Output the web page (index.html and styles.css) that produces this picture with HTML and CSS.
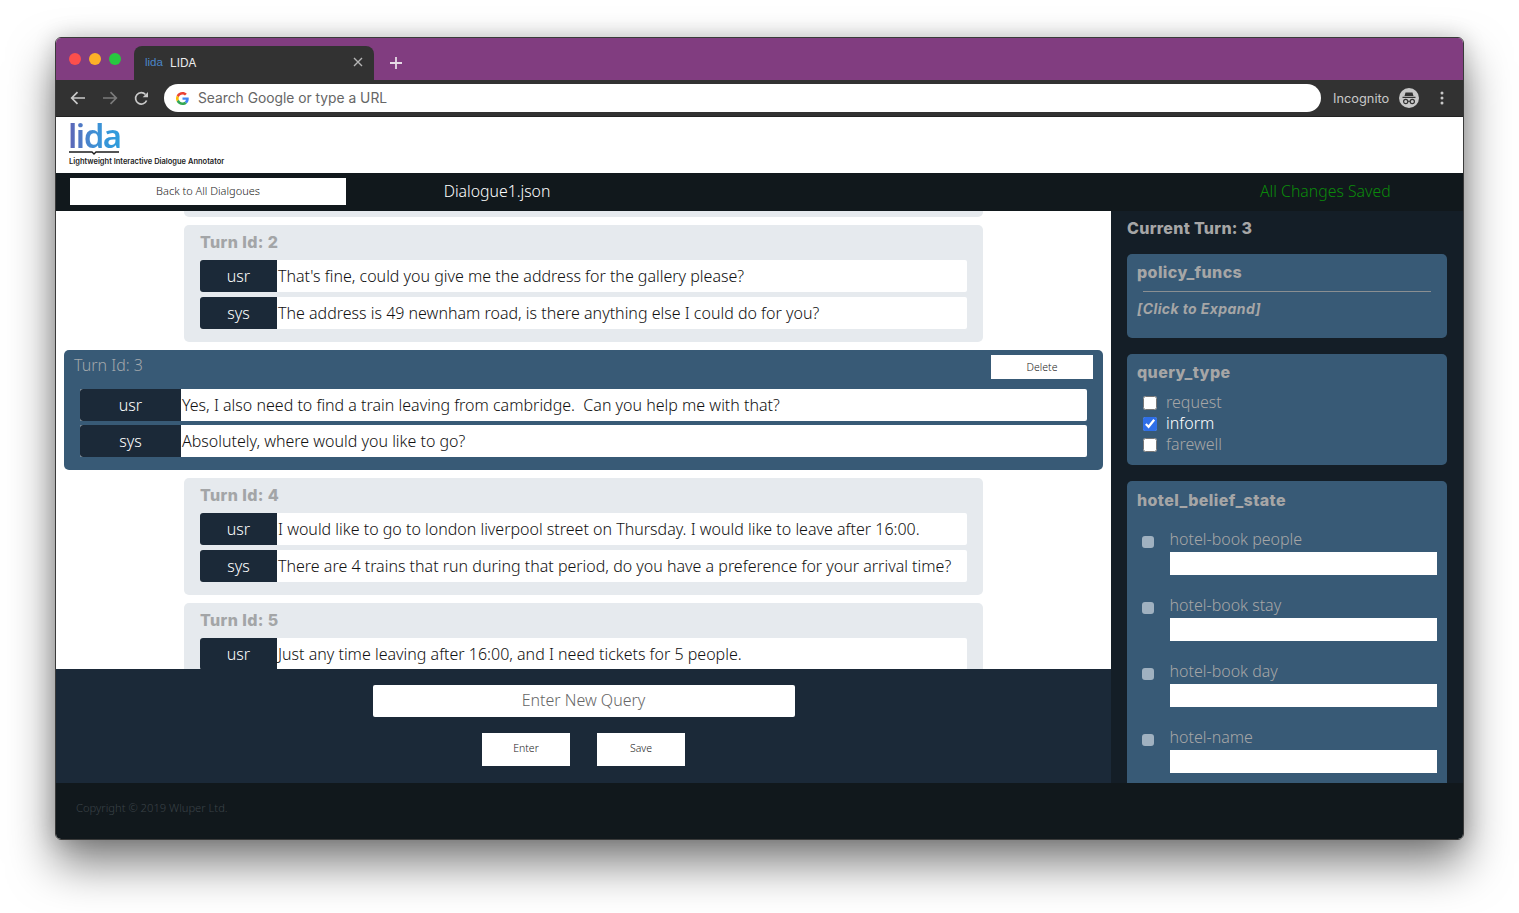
FILE: index.html
```html
<!DOCTYPE html>
<html lang="en">
<head>
    <meta charset="UTF-8">
    <title>LIDA</title>
    <link rel="stylesheet" href="styles.css">
</head>
<body>
    <div class="window">
        <!-- Browser chrome -->
        <div class="tabbar">
            <div class="lights">
                <span class="light red"></span>
                <span class="light yellow"></span>
                <span class="light green"></span>
            </div>
            <div class="tab">
                <span class="tab-logo">lida</span>
                <span class="tab-title">LIDA</span>
                <svg class="tab-close" width="10" height="10" viewBox="0 0 10 10"><path d="M1 1l8 8M9 1l-8 8" stroke="#b5b5b5" stroke-width="1.4"/></svg>
            </div>
            <svg class="new-tab" width="12" height="12" viewBox="0 0 12 12"><path d="M6 0v12M0 6h12" stroke="#e6dbe6" stroke-width="1.8"/></svg>
        </div>
        <div class="toolbar">
            <svg class="nav-icon" width="16" height="14" viewBox="0 0 16 14"><path d="M15 7H2M7.500 1.200L1.700 7l5.800 5.800" fill="none" stroke="#c9c9c9" stroke-width="1.700"/></svg>
            <svg class="nav-icon" width="16" height="14" viewBox="0 0 16 14"><path d="M1 7h13M8.500 1.200L14.300 7l-5.800 5.800" fill="none" stroke="#7b7b7b" stroke-width="1.700"/></svg>
            <svg class="nav-icon" width="15" height="15" viewBox="0 0 15 15"><path d="M12.600 9.500A5.700 5.700 0 1 1 11.500 3.500" fill="none" stroke="#c9c9c9" stroke-width="1.700"/><path d="M14 1v5.300H8.700z" fill="#c9c9c9"/></svg>
            <div class="omnibox">
                <svg width="13" height="13" viewBox="0 0 48 48"><path fill="#ea4335" d="M24 9.500c3.500 0 6.700 1.300 9.100 3.500l6.800-6.800C35.800 2.400 30.300 0 24 0 14.600 0 6.500 5.400 2.600 13.200l7.900 6.200C12.400 13.700 17.700 9.500 24 9.500z"/><path fill="#4285f4" d="M47 24.500c0-1.600-.1-3.100-.4-4.500H24v9h12.900c-.6 3-2.200 5.500-4.700 7.200l7.700 6C44.400 38 47 31.800 47 24.500z"/><path fill="#fbbc05" d="M10.500 28.600C10 27.200 9.800 25.600 9.800 24s.3-3.200.7-4.600l-7.900-6.200C.9 16.400 0 20.100 0 24s.9 7.600 2.600 10.800z"/><path fill="#34a853" d="M24 48c6.500 0 11.900-2.100 15.900-5.800l-7.700-6c-2.200 1.400-4.900 2.300-8.200 2.300-6.300 0-11.600-4.200-13.500-9.900l-7.900 6.100C6.500 42.600 14.600 48 24 48z"/></svg>
                <span>Search Google or type a URL</span>
            </div>
            <span class="incognito-label">Incognito</span>
            <svg class="incognito-icon" width="20" height="20" viewBox="0 0 20 20"><circle cx="10" cy="10" r="10" fill="#c8c8c8"/><path d="M6.500 4.500h7l1 3.500h-9zM3.500 8.800h13v1.200h-13z" fill="#333"/><circle cx="6.700" cy="13.500" r="2.100" fill="none" stroke="#333" stroke-width="1.200"/><circle cx="13.300" cy="13.500" r="2.100" fill="none" stroke="#333" stroke-width="1.200"/><path d="M8.800 13.300h2.400" stroke="#333"/></svg>
            <svg class="kebab" width="4" height="14" viewBox="0 0 4 14"><circle cx="2" cy="2" r="1.500" fill="#c8c8c8"/><circle cx="2" cy="7" r="1.500" fill="#c8c8c8"/><circle cx="2" cy="12" r="1.500" fill="#c8c8c8"/></svg>
        </div>

        <!-- App header -->
        <div class="brand">
            <div class="brand-logo">lida</div>
            <svg class="brand-book" width="50" height="4" viewBox="0 0 50 4"><path d="M0 1h23l2 2 2-2h23" fill="none" stroke="#1c1c1c" stroke-width="1.300"/></svg>
            <div class="brand-tagline">Lightweight Interactive Dialogue Annotator</div>
        </div>
        <div class="topbar">
            <button class="back-btn">Back to All Dialgoues</button>
            <div class="file-name">Dialogue1.json</div>
            <div class="saved">All Changes Saved</div>
        </div>

        <div class="main">
            <div class="left">
                <div class="dialogue">
                    <div class="turn-tail"></div>

                    <div class="turn">
                        <div class="turn-id">Turn Id: 2</div>
                        <div class="line"><span class="speaker">usr</span><span class="utterance">That's fine, could you give me the address for the gallery please?</span></div>
                        <div class="line"><span class="speaker">sys</span><span class="utterance">The address is 49 newnham road, is there anything else I could do for you?</span></div>
                    </div>

                    <div class="turn-current">
                        <div class="current-head">
                            <span class="current-id">Turn Id: 3</span>
                            <button class="delete-btn">Delete</button>
                        </div>
                        <div class="line"><span class="speaker wide">usr</span><span class="utterance">Yes, I also need to find a train leaving from cambridge.&nbsp; Can you help me with that?</span></div>
                        <div class="line"><span class="speaker wide">sys</span><span class="utterance">Absolutely, where would you like to go?</span></div>
                    </div>

                    <div class="turn">
                        <div class="turn-id">Turn Id: 4</div>
                        <div class="line"><span class="speaker">usr</span><span class="utterance">I would like to go to london liverpool street on Thursday. I would like to leave after 16:00.</span></div>
                        <div class="line"><span class="speaker">sys</span><span class="utterance">There are 4 trains that run during that period, do you have a preference for your arrival time?</span></div>
                    </div>

                    <div class="turn">
                        <div class="turn-id">Turn Id: 5</div>
                        <div class="line"><span class="speaker">usr</span><span class="utterance">Just any time leaving after 16:00, and I need tickets for 5 people.</span></div>
                    </div>
                </div>

                <div class="query-bar">
                    <input class="query-input" type="text" placeholder="Enter New Query">
                    <div class="query-buttons">
                        <button class="query-btn">Enter</button>
                        <button class="query-btn">Save</button>
                    </div>
                </div>
            </div>

            <div class="right">
                <div class="current-turn">Current Turn: 3</div>

                <div class="panel policy">
                    <div class="panel-title">policy_funcs</div>
                    <hr class="panel-rule">
                    <div class="expand">[Click to Expand]</div>
                </div>

                <div class="panel query-type">
                    <div class="panel-title">query_type</div>
                    <div class="options">
                        <label class="option"><input type="checkbox">request</label>
                        <label class="option on"><input type="checkbox" checked>inform</label>
                        <label class="option"><input type="checkbox">farewell</label>
                    </div>
                </div>

                <div class="panel belief">
                    <div class="panel-title">hotel_belief_state</div>
                    <div class="slot"><span class="slot-check"></span><div class="slot-body"><div class="slot-name">hotel-book people</div><div class="slot-input"></div></div></div>
                    <div class="slot"><span class="slot-check"></span><div class="slot-body"><div class="slot-name">hotel-book stay</div><div class="slot-input"></div></div></div>
                    <div class="slot"><span class="slot-check"></span><div class="slot-body"><div class="slot-name">hotel-book day</div><div class="slot-input"></div></div></div>
                    <div class="slot"><span class="slot-check"></span><div class="slot-body"><div class="slot-name">hotel-name</div><div class="slot-input"></div></div></div>
                </div>
            </div>
        </div>

        <div class="footer">Copyright © 2019 Wluper Ltd.</div>
    </div>
</body>
</html>
```

FILE: styles.css
```css
* {
    box-sizing: border-box;
}
body {
    margin: 0;
    padding: 37px 55px 0;
    height: 913px;
    overflow: hidden;
    background-color: #ffffff;
    font-family: "Noto Sans", sans-serif;
    font-weight: 300;
}
button {
    font-family: inherit;
    font-weight: 300;
    border: none;
    cursor: pointer;
}
.window {
    width: 1409px;
    height: 803px;
    display: flex;
    flex-direction: column;
    border: 1px solid #3a3a3a;
    border-radius: 6px;
    overflow: hidden;
    box-shadow: 0 24px 46px rgba(0, 0, 0, 0.5), 0 0 22px rgba(0, 0, 0, 0.18);
}

/* browser chrome */
.tabbar {
    height: 42px;
    flex: none;
    display: flex;
    align-items: flex-end;
    background: #813d80;
}
.lights {
    display: flex;
    gap: 8px;
    width: 78px;
    padding: 0 0 15px 13px;
    align-self: flex-end;
}
.light {
    width: 12px;
    height: 12px;
    border-radius: 50%;
}
.red { background: #fc4f4c; }
.yellow { background: #fdb027; }
.green { background: #28c840; }
.tab {
    width: 240px;
    height: 34px;
    display: flex;
    align-items: center;
    padding: 0 11px 2px 11px;
    background: #323232;
    border-radius: 8px 8px 0 0;
    color: #ececec;
    font-size: 12px;
    font-weight: 400;
    font-family: "Inter", sans-serif;
}
.tab-logo {
    width: 25px;
    color: #4b86c8;
    font-size: 11.500px;
    font-family: "Liberation Sans", sans-serif;
}
.tab-title {
    flex: 1;
}
.new-tab {
    margin: 0 0 11px 16px;
}
.toolbar {
    height: 37px;
    flex: none;
    display: flex;
    align-items: center;
    padding: 0 0 0 14px;
    background: #323232;
    border-bottom: 1px solid #222222;
    font-family: "Inter", sans-serif;
    font-weight: 400;
}
.nav-icon {
    margin-right: 16px;
    flex: none;
}
.omnibox {
    width: 1157px;
    height: 28px;
    margin-left: -1px;
    display: flex;
    align-items: center;
    gap: 9px;
    padding-left: 12px;
    background: #ffffff;
    border-radius: 14px;
    font-size: 13.800px;
    color: #666666;
}
.incognito-label {
    margin-left: 12px;
    width: 66px;
    font-size: 12.800px;
    color: #c8c8c8;
}
.incognito-icon {
    flex: none;
}
.kebab {
    margin-left: 21px;
    flex: none;
}

/* app header */
.brand {
    height: 56px;
    flex: none;
    padding: 5px 0 0 12px;
    background: #ffffff;
}
.brand-logo {
    height: 29px;
    width: 58px;
    font-family: "Noto Sans", sans-serif;
    font-size: 33px;
    font-weight: 600;
    line-height: 28px;
    letter-spacing: -1.500px;
    background: linear-gradient(90deg, #5f63b5, #3f8fd4 45%, #2f9cdc 85%);
    -webkit-background-clip: text;
    background-clip: text;
    color: transparent;
}
.brand-book {
    display: block;
    margin-left: 1px;
}
.brand-tagline {
    margin: 2px 0 0 1px;
    font-family: "Inter", sans-serif;
    font-size: 7.500px;
    font-weight: 600;
    color: #222222;
    white-space: nowrap;
}
.topbar {
    height: 38px;
    flex: none;
    display: flex;
    align-items: center;
    padding: 0 0 2px 14px;
    background: #11181c;
}
.back-btn {
    width: 276px;
    height: 27px;
    padding-bottom: 3px;
    background: #ffffff;
    color: #222222;
    font-size: 11px;
}
.file-name {
    width: 302px;
    text-align: center;
    color: #ffffff;
    font-size: 15.800px;
}
.saved {
    margin-left: 612px;
    color: #0b8a0b;
    font-size: 15.800px;
    white-space: nowrap;
}

/* main area */
.main {
    flex: 1;
    min-height: 0;
    display: flex;
}
.left {
    width: 1055px;
    flex: none;
    display: flex;
    flex-direction: column;
}
.dialogue {
    height: 458px;
    flex: none;
    overflow: hidden;
    display: flex;
    flex-direction: column;
    align-items: center;
    gap: 8px;
    padding: 0 8px;
    background: #ffffff;
}
.turn-tail {
    width: 799px;
    height: 6px;
    flex: none;
    background: #e6eaee;
    border-radius: 0 0 5px 5px;
}
.turn {
    width: 799px;
    flex: none;
    padding: 8px 16px 13px;
    background: #e6eaee;
    border-radius: 5px;
}
.turn-id {
    height: 19px;
    margin-bottom: 8px;
    font-family: "Inter", sans-serif;
    font-size: 16px;
    font-weight: 800;
    line-height: 19px;
    letter-spacing: 0.4px;
    color: #a3a5a7;
}
.line {
    display: flex;
    height: 32px;
    margin-bottom: 5px;
    background: #ffffff;
    border-radius: 2px;
}
.line:last-child {
    margin-bottom: 0;
}
.speaker {
    width: 77px;
    flex: none;
    display: flex;
    align-items: center;
    justify-content: center;
    background: #1b2938;
    color: #ffffff;
    font-size: 16px;
    border-radius: 3px 0 0 3px;
}
.speaker.wide {
    width: 101px;
}
.utterance {
    padding-left: 1px;
    color: #111111;
    font-size: 16px;
    line-height: 32px;
    white-space: nowrap;
}
.turn-current {
    width: 1039px;
    flex: none;
    padding: 5px 16px 13px;
    background: #385a76;
    border-radius: 5px;
}
.turn-current .line {
    margin-bottom: 4px;
}
.turn-current .line:last-child {
    margin-bottom: 0;
}
.current-head {
    display: flex;
    justify-content: space-between;
    height: 34px;
    margin: 0 -6px 0 -6px;
}
.current-id {
    font-size: 16px;
    line-height: 21px;
    color: #a3a8ac;
}
.delete-btn {
    width: 102px;
    height: 24px;
    padding-bottom: 2px;
    background: #ffffff;
    color: #222222;
    font-size: 10.500px;
}
.query-bar {
    flex: 1;
    display: flex;
    flex-direction: column;
    align-items: center;
    padding: 16px 0 0 0;
    background: #1b2938;
}
.query-input {
    width: 422px;
    height: 32px;
    padding-bottom: 3px;
    border: none;
    border-radius: 2px;
    text-align: center;
    font-family: inherit;
    font-weight: 300;
    font-size: 16px;
    background: #ffffff;
}
.query-input::placeholder {
    color: #666666;
    opacity: 1;
}
.query-buttons {
    display: flex;
    gap: 27px;
    margin-top: 16px;
}
.query-btn {
    width: 88px;
    height: 33px;
    padding-bottom: 5px;
    background: #ffffff;
    color: #222222;
    font-size: 10.500px;
}

/* right column */
.right {
    flex: 1;
    min-width: 0;
    overflow: hidden;
    padding: 8px 16px 0;
    background: #141e27;
}
.current-turn {
    height: 19px;
    margin-bottom: 16px;
    font-family: "Inter", sans-serif;
    font-size: 16px;
    font-weight: 800;
    line-height: 19px;
    letter-spacing: 0.3px;
    color: #a6a6a6;
}
.panel {
    margin-bottom: 16px;
    padding: 9px 10px 8px;
    background: #385a76;
    border-radius: 5px;
    color: #a6a6a6;
}
.panel-title {
    height: 19px;
    font-family: "Inter", sans-serif;
    font-size: 16px;
    font-weight: 800;
    line-height: 19px;
    letter-spacing: 0.4px;
    color: #a6a6a6;
}
.panel-rule {
    margin: 9px 6px 8px;
    border: none;
    border-top: 1px solid #8a8f92;
}
.policy {
    height: 84px;
}
.expand {
    font-family: "Inter", sans-serif;
    font-size: 14px;
    font-weight: 700;
    font-style: italic;
    letter-spacing: 0.4px;
    color: #a6a6a6;
}
.query-type {
    height: 111px;
}
.options {
    margin-top: 9px;
    padding-left: 6px;
}
.option {
    display: flex;
    align-items: center;
    height: 21px;
    font-size: 16px;
}
.option input {
    width: 14px;
    height: 14px;
    margin: 2px 9px 0 0;
    accent-color: #2f6fe8;
}
.option.on {
    color: #ffffff;
}
.belief {
    padding-top: 10px;
    padding-bottom: 40px;
}
.belief .panel-title {
    margin-bottom: 19px;
}
.slot {
    display: flex;
    margin-bottom: 20px;
}
.slot-check {
    width: 12px;
    height: 12px;
    margin: 7px 16px 0 5px;
    flex: none;
    background: #a0b1c0;
    border-radius: 3px;
}
.slot-body {
    flex: 1;
}
.slot-name {
    height: 23px;
    margin-left: -0.5px;
    font-size: 16px;
    line-height: 21px;
}
.slot-input {
    height: 23px;
    background: #ffffff;
}
.footer {
    height: 56px;
    flex: none;
    padding: 17px 0 0 20px;
    background: #11181c;
    color: #3a4247;
    font-size: 11.200px;
}
```
